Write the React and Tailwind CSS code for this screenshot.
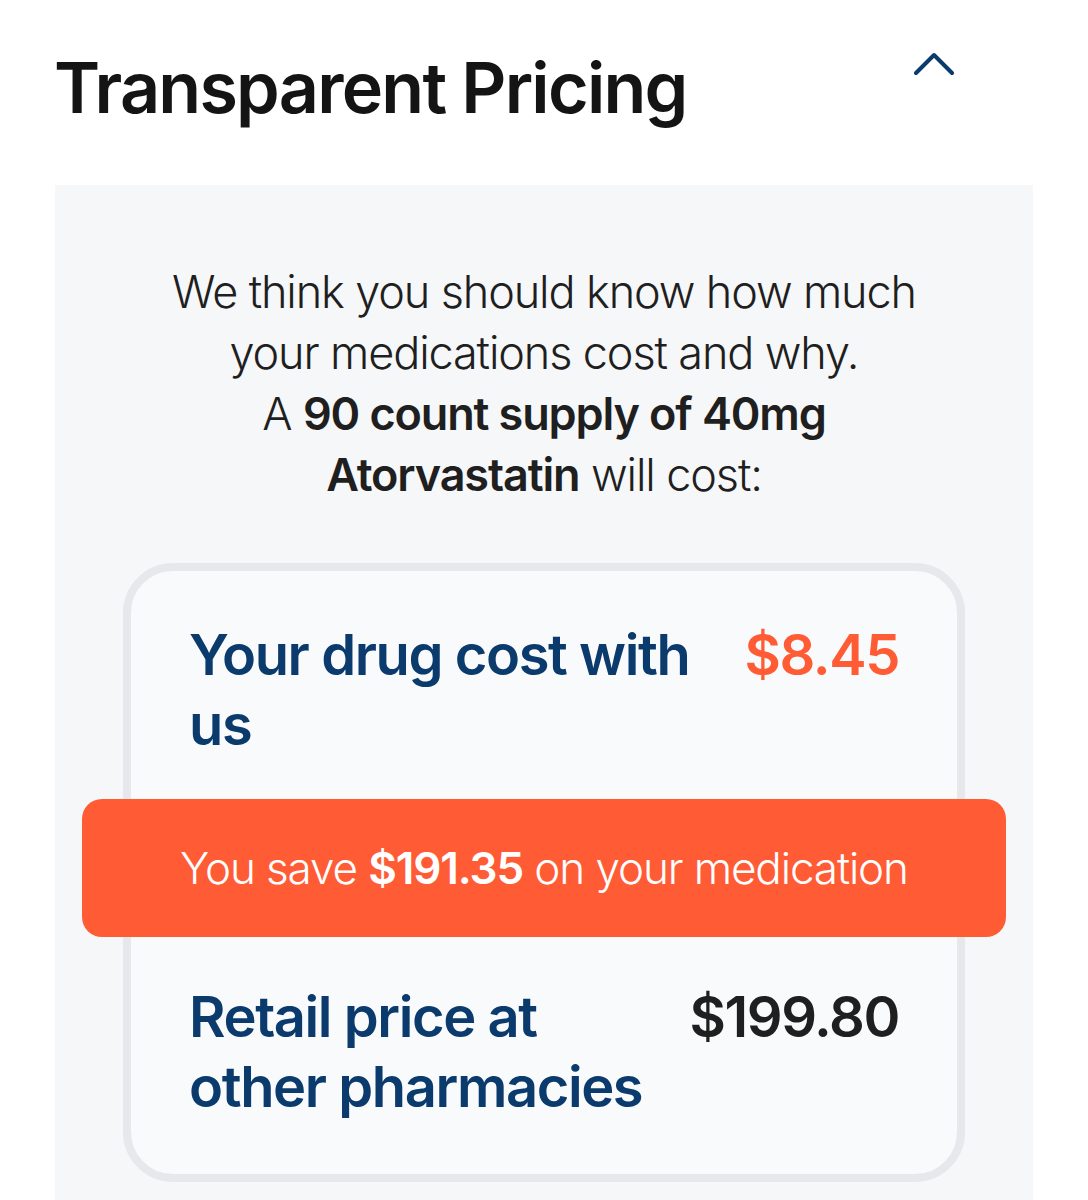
import React from 'react';

const PriceRow = ({ label, price, priceClass }) => (
  <div className="flex items-start justify-between gap-6">
    <div className="text-[56px] leading-[70px] font-semibold tracking-tight text-[#0b3a6d]">{label}</div>
    <div className={`text-[56px] leading-[70px] font-semibold tracking-tight ${priceClass}`}>{price}</div>
  </div>
);

const App = () => {
  return (
    <div className="w-[1088px] h-[1200px] overflow-hidden bg-white font-['Inter',sans-serif]">
      {/* Header */}
      <div className="flex items-start justify-between h-[185px] pl-[54px] pr-[134px] pt-[48px]">
        <h2 className="text-[70px] leading-[80px] font-semibold tracking-tight text-[#141414]">
          Transparent Pricing
        </h2>
        <svg className="mt-[4px] w-[40px] h-[24px]" viewBox="0 0 40 24" fill="none" stroke="#0b3a6d" strokeWidth={4} strokeLinecap="round" strokeLinejoin="round">
          <path d="M2 21L20 3l18 18" />
        </svg>
      </div>

      {/* Panel */}
      <div className="mx-[55px] bg-[#f6f7f9] pt-[76px] pb-[40px]">
        <p className="text-center text-[45px] leading-[61px] font-light tracking-tight text-[#1f1f1f]">
          We think you should know how much
          <br />
          your medications cost and why.
          <br />
          A <span className="font-semibold">90 count supply of 40mg</span>
          <br />
          <span className="font-semibold">Atorvastatin</span> will cost:
        </p>

        <div className="mx-[68px] mt-[58px] rounded-[50px] border-8 border-[#e6e8ec] bg-[#f9fafb]">
          <div className="px-[58px] pt-[49px] pb-[39px]">
            <PriceRow
              label={<>Your drug cost with<br />us</>}
              price="$8.45"
              priceClass="text-[#ff5c35]"
            />
          </div>

          <div className="-mx-[49px] flex h-[138px] items-center justify-center rounded-[20px] bg-[#ff5c35] text-[44px] font-light tracking-tight text-white">
            <span>
              You save <span className="font-semibold">$191.35</span> on your medication
            </span>
          </div>

          <div className="px-[58px] pt-[45px] pb-[52px]">
            <PriceRow
              label={<>Retail price at<br />other pharmacies</>}
              price="$199.80"
              priceClass="text-[#1f1f1f]"
            />
          </div>
        </div>
      </div>
    </div>
  );
};

export default App;
